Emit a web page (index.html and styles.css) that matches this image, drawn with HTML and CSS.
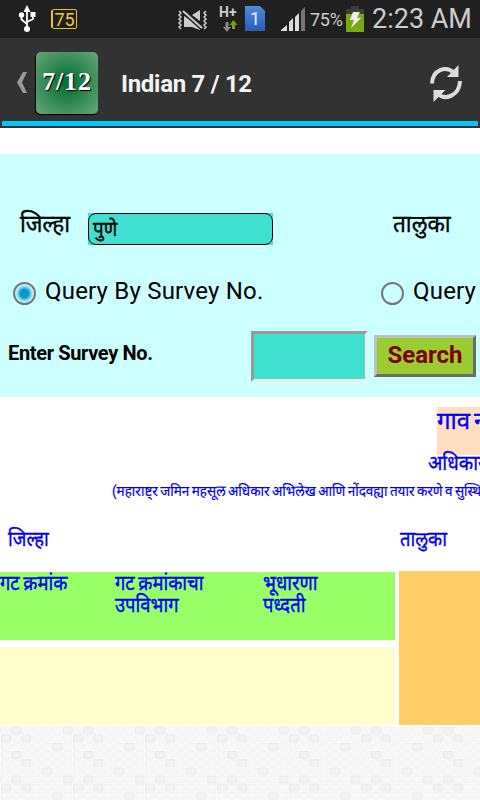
FILE: index.html
```
<!DOCTYPE html>
<html lang="mr">
<head>
  <meta charset="UTF-8" />
  <meta name="viewport" content="width=device-width, initial-scale=1" />
  <title>Indian 7 / 12</title>
  <link rel="stylesheet" href="styles.css">
</head>
<body>
  <!-- Status bar -->
  <div class="status-bar">
    <svg class="icon-usb" width="18" height="28" viewBox="0 0 18 28">
      <g fill="none" stroke="#fff" stroke-width="1.800">
        <path d="M9 4v20M3.500 11v3.500L9 19M15 10v4L9 17" />
      </g>
      <path fill="#fff" d="M9 0l3.500 7h-7zM12.500 7h5v5h-5z" />
      <circle cx="3.500" cy="10" r="2.700" fill="#fff" />
      <circle cx="9" cy="24" r="3" fill="#fff" />
    </svg>
    <span class="battery-num">75</span>
    <svg class="icon-mute" width="32" height="22" viewBox="0 0 32 22">
      <g fill="none" stroke="#ccc" stroke-width="1.500">
        <path d="M2 2l2 2-2 2 2 2-2 2 2 2-2 2 2 2-2 2 2 2M29 2l-2 2 2 2-2 2 2 2-2 2 2 2-2 2 2 2-2 2" />
      </g>
      <path fill="#ccc" d="M15 6l8-5v11zM7 7v11h8l8 3v-4z" />
      <path stroke="#202020" stroke-width="5" d="M6 2l19 17" />
      <path stroke="#ccc" stroke-width="2" d="M6 2l19 17" />
    </svg>
    <div class="network">
      <span>H+</span>
      <svg width="14" height="12" viewBox="0 0 14 12">
        <path fill="#888" d="M2.500 2h3v5H8l-4 5-4-5h2.500z" />
        <path fill="#76a312" d="M9 9V5H6.500L10.500 0l4 5H12v4z" />
      </svg>
    </div>
    <span class="sim">1</span>
    <svg class="icon-signal" width="25" height="24" viewBox="0 0 25 24">
      <path fill="#ddd" d="M0 24v-1l6-5v6zM8 24v-9l4-4v13zM14 24V10l4-4v18z" />
      <path fill="#777" d="M20 24V4l4-4v24z" />
    </svg>
    <span class="percent">75%</span>
    <svg class="icon-battery" width="18" height="26" viewBox="0 0 18 26">
      <path fill="#3c3c3c" d="M5 0h8v3h5v6H0V3h5z" />
      <path fill="#76a912" d="M0 8h18v18H0z" />
      <path fill="#eee" d="M7 6h7l-3 6h4L5 22l3-8H4z" />
    </svg>
    <span class="clock">2:23 AM</span>
  </div>

  <!-- Action bar -->
  <div class="action-bar">
    <div class="action-row">
      <svg class="icon-back" width="10" height="21" viewBox="0 0 10 21">
        <path fill="#999" d="M6 0h4L5 10.500 10 21H6L0 10.500z" />
      </svg>
      <div class="app-logo">7/12</div>
      <h1 class="app-title">Indian 7 / 12</h1>
      <svg class="icon-refresh" width="34" height="37" viewBox="0 0 34 37">
        <g fill="none" stroke="#ddd" stroke-width="4">
          <path d="M3 18.500C3.500 5 17 0 25 8" />
          <path d="M31 16C30.500 30 17 36 9 29" />
        </g>
        <path fill="#ddd" d="M29.500 0v12H18zM4.500 37V25H16.500z" />
      </svg>
    </div>
    <div class="blue-line"></div>
  </div>

  <!-- Search form -->
  <div class="form-panel">
    <div class="row-district">
      <label class="lbl-jilha"><span class="mr">जिल्हा</span></label>
      <div class="select-box"><div class="select-inner"><span class="mr">पुणे</span></div></div>
      <label class="lbl-taluka"><span class="mr">तालुका</span></label>
    </div>
    <div class="row-radio">
      <span class="radio checked"></span>
      <label class="radio-survey">Query By Survey No.</label>
      <span class="radio"></span>
      <label>Query</label>
    </div>
    <div class="row-survey">
      <label class="lbl-survey">Enter Survey No.</label>
      <input class="survey-input" type="text">
      <button class="btn-search">Search</button>
    </div>
  </div>

  <!-- Record -->
  <div class="record">
    <div class="village"><span class="mr">गाव न</span></div>
    <div class="rights"><span class="mr">अधिकार</span></div>
    <div class="rules"><span class="mr">(महाराष्ट्र जमिन महसूल अधिकार अभिलेख आणि नोंदवह्या तयार करणे व सुस्थि</span></div>
    <div class="places">
      <div class="place-jilha"><span class="mr">जिल्हा</span></div>
      <div><span class="mr">तालुका</span></div>
    </div>
    <div class="tables">
      <div class="left-table">
        <div class="table-head">
          <div class="col-gat"><span class="mr">गट क्रमांक</span></div>
          <div class="col-sub"><span class="mr">गट क्रमांकाचा<br>उपविभाग</span></div>
          <div class="col-type"><span class="mr">भूधारणा<br>पध्दती</span></div>
        </div>
        <div class="table-body"></div>
      </div>
      <div class="right-table"></div>
    </div>
  </div>

  <!-- Tiled background -->
  <svg class="tiles" width="480" height="74">
    <defs>
      <pattern id="tile" width="10.280" height="8.200" patternUnits="userSpaceOnUse" x="1" y="0.500">
        <rect x="0.500" y="0.500" width="8.800" height="6.800" rx="0.700" fill="#f8f8f8" stroke="#f3f3f3" />
      </pattern>
      <pattern id="dark" width="71.960" height="49.200" patternUnits="userSpaceOnUse" x="1" y="0.500">
        <g fill="#f2f2f2" stroke="#ececec">
          <rect x="10.800" y="0.500" width="8.800" height="6.800" />
          <rect x="62.200" y="0.500" width="8.800" height="6.800" />
          <rect x="0.500" y="8.700" width="8.800" height="6.800" />
          <rect x="21" y="8.700" width="8.800" height="6.800" />
          <rect x="51.900" y="16.900" width="8.800" height="6.800" />
          <rect x="10.800" y="25.100" width="8.800" height="6.800" />
          <rect x="21" y="33.300" width="8.800" height="6.800" />
          <rect x="41.600" y="41.500" width="8.800" height="6.800" />
        </g>
      </pattern>
    </defs>
    <rect width="480" height="74" fill="url(#tile)" />
    <rect width="480" height="74" fill="url(#dark)" />
  </svg>
</body>
</html>
```
FILE: styles.css
```
* {
    box-sizing: border-box;
}

body {
    margin: 0;
    width: 480px;
    height: 800px;
    overflow: hidden;
    background: #fff;
    font-family: Roboto, "Noto Sans Devanagari", "Noto Sans", sans-serif;
    color: #000;
}

svg {
    display: block;
    flex: none;
}

span {
    white-space: nowrap;
}

/* Marathi text, slightly condensed */
.mr {
    display: inline-block;
    transform: scaleX(0.94);
    transform-origin: left;
    -webkit-text-stroke: 0.35px;
}

/* Status bar */
.status-bar {
    display: flex;
    height: 38px;
    background: #202020;
    color: #ccc;
}

.icon-usb {
    margin: 5px 0 0 18px;
}

.battery-num {
    width: 25px;
    height: 20px;
    margin: 9px 0 0 16px;
    border: 1px solid #e8c22d;
    border-radius: 2px;
    box-shadow: -2px 0 0 -1px #e8c22d;
    color: #f1c92e;
    font-size: 18px;
    line-height: 19px;
    text-align: center;
}

.icon-mute {
    margin: 9px 0 0 100px;
}

.network {
    width: 18px;
    margin: 4px 0 0 10px;
    font-size: 14px;
    font-weight: bold;
    line-height: 16px;
}

.network svg {
    margin-left: 4px;
}

.sim {
    width: 20px;
    height: 25px;
    margin: 6px 0 0 8px;
    background: linear-gradient(#4b8bdc, #2a5db5);
    clip-path: polygon(0 0, 75% 0, 100% 20%, 100% 100%, 0 100%);
    color: #eee;
    font-size: 18px;
    line-height: 26px;
    text-align: center;
}

.icon-signal {
    margin: 7px 0 0 16px;
}

.percent {
    width: 36px;
    margin: 9px 0 0 4px;
    font-size: 18px;
    letter-spacing: -0.3px;
    line-height: 22px;
}

.icon-battery {
    margin-top: 6px;
}

.clock {
    margin: 3px 0 0 8px;
    font-size: 27px;
    line-height: 32px;
}

/* Action bar */
.action-bar {
    height: 90px;
    background: #323232;
}

.action-row {
    display: flex;
    height: 83px;
}

.icon-back {
    margin: 34px 0 0 17px;
}

.app-logo {
    width: 62px;
    height: 62px;
    margin: 14px 0 0 9px;
    border-radius: 5px;
    background: radial-gradient(circle, #0b7037 10%, #65a97a 100%);
    box-shadow: -1px 1px 1px #000;
    color: #fff;
    font: bold 26px/59px "Liberation Serif", serif;
    letter-spacing: 0.8px;
    text-align: center;
    text-shadow: 1px 1px 1px #000;
}

.app-title {
    width: 306px;
    margin: 32px 0 0 23px;
    color: #f3f3f3;
    font-size: 24px;
    letter-spacing: -0.3px;
    line-height: 28px;
}

.icon-refresh {
    margin: 27px 0 0 2px;
}

.blue-line {
    height: 5px;
    margin: 0 2px;
    background: #00c8ff;
}

/* Search form */
.form-panel {
    height: 243px;
    margin-top: 26px;
    padding-top: 54px;
    background: #ccffff;
}

.row-district {
    display: flex;
    height: 68px;
    font-size: 24px;
    line-height: 32px;
}

.lbl-jilha {
    width: 68px;
    margin-left: 20px;
}

.select-box {
    width: 185px;
    height: 32px;
    margin-top: 5px;
    background: turquoise;
}

.select-inner {
    height: 32px;
    border: 1px solid #000;
    border-radius: 8px;
    padding-left: 4px;
    font-size: 20px;
    line-height: 30px;
}

.lbl-taluka {
    margin-left: 120px;
}

.row-radio {
    display: flex;
    height: 55px;
    font-size: 24px;
    line-height: 30px;
    white-space: nowrap;
}

.radio {
    flex: none;
    width: 23px;
    height: 23px;
    margin: 6px 9px 0 13px;
    border: 2px solid #777;
    border-radius: 50%;
}

.radio + label {
    letter-spacing: 0.2px;
}

.radio.checked {
    background: radial-gradient(circle, #0798cd 30%, #9de0ed 55%, #ccffff 70%);
}

.radio-survey {
    flex: none;
    width: 323px;
}

.row-survey {
    display: flex;
}

.lbl-survey {
    width: 243px;
    margin: 9px 0 0 8px;
    font-size: 20px;
    font-weight: bold;
    letter-spacing: -0.35px;
    line-height: 26px;
}

.survey-input {
    width: 117px;
    height: 51px;
    border: 3px solid;
    border-color: #9a9a9a #eee #eee #9a9a9a;
    background: turquoise;
}

.btn-search {
    width: 102px;
    height: 42px;
    margin: 4px 0 0 6px;
    padding: 0 0 2px;
    border: 3px solid;
    border-color: #bfbfbf #6b6b6b #6b6b6b #bfbfbf;
    background: yellowgreen;
    color: maroon;
    font: bold 24px/34px Roboto, sans-serif;
}

/* Record */
.record {
    height: 329px;
    padding-top: 10px;
    overflow: hidden;
    color: #0000f5;
}

.village {
    height: 48px;
    margin-left: 437px;
    background: #ffdfbf;
    font-size: 24px;
    line-height: 28px;
}

.village .mr {
    transform: none;
    word-spacing: -2px;
}

.rights {
    height: 26px;
    margin: -4px 0 0 428px;
    font-size: 20px;
    line-height: 24px;
}

.rules {
    height: 36px;
    margin: 4px 0 0 112px;
    font-size: 15px;
    line-height: 20px;
}

.rules .mr {
    transform: scaleX(0.9);
    word-spacing: -1px;
    -webkit-text-stroke-width: 0.2px;
}

.places {
    display: flex;
    height: 54px;
    font-size: 20px;
    line-height: 44px;
}

.place-jilha {
    width: 392px;
    margin-left: 8px;
}

.places .mr {
    transform: scaleX(0.92);
}

.tables {
    display: flex;
    gap: 4px;
}

.left-table {
    width: 395px;
}

.table-head {
    display: flex;
    height: 68px;
    margin-top: 1px;
    background: #99ff66;
    font-size: 20px;
    line-height: 22px;
}

.table-head .mr {
    transform: scaleX(0.92);
    word-spacing: -1px;
}

.col-gat {
    width: 115px;
}

.col-sub {
    width: 148px;
}

.table-body {
    height: 78px;
    margin-top: 7px;
    background: #ffffcc;
}

.right-table {
    width: 81px;
    height: 154px;
    background: #ffcc66;
}

.tiles {
    background: #fff;
}
```
